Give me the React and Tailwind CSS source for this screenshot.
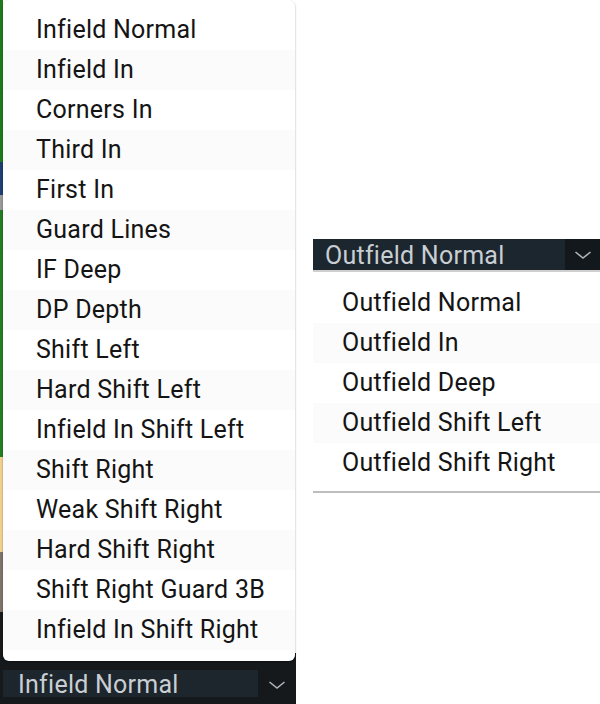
const infieldOptions = [
  'Infield Normal',
  'Infield In',
  'Corners In',
  'Third In',
  'First In',
  'Guard Lines',
  'IF Deep',
  'DP Depth',
  'Shift Left',
  'Hard Shift Left',
  'Infield In Shift Left',
  'Shift Right',
  'Weak Shift Right',
  'Hard Shift Right',
  'Shift Right Guard 3B',
  'Infield In Shift Right',
];

const outfieldOptions = [
  'Outfield Normal',
  'Outfield In',
  'Outfield Deep',
  'Outfield Shift Left',
  'Outfield Shift Right',
];

function Chevron() {
  return (
    <svg width="18" height="10" viewBox="0 0 18 10" fill="none">
      <path d="M1.5 2 L9 8 L16.5 2" stroke="#aeb4ba" strokeWidth="1.6" />
    </svg>
  );
}

function OptionRow({ label, index, pad }) {
  return (
    <div
      className={`flex h-10 items-center ${pad} ${index % 2 === 1 ? 'bg-[#fbfbfb]' : 'bg-white'}`}
    >
      {label}
    </div>
  );
}

export default function App() {
  return (
    <div className="flex h-[704px] w-[600px] overflow-hidden bg-white font-['Roboto',sans-serif] text-[25px] tracking-[0.25px] text-[#141414]">
      {/* infield picker, opened upward */}
      <div className="relative h-full w-[296px] shrink-0">
        <div className="flex h-[653px] w-[3px] flex-col">
          <div className="h-[162px] bg-[#1f7a1f]" />
          <div className="h-[33px] bg-[#1d3f73]" />
          <div className="h-[15px] bg-[#9a9a9a]" />
          <div className="h-[247px] bg-[#237d23]" />
          <div className="h-[95px] bg-[#f2cf8c]" />
          <div className="h-[60px] bg-[#7f7469]" />
          <div className="h-[41px] bg-[#1a1a1a]" />
        </div>
        <div className="flex h-[51px] bg-[#15191c] pt-[17px] pb-[7px]">
          <div className="ml-[3px] flex w-[255px] items-center bg-[#1d262d] pt-[3px] pl-[15px] text-[#c9ced3]">
            Infield Normal
          </div>
          <div className="flex flex-1 items-center justify-center pt-[3px]">
            <Chevron />
          </div>
        </div>

        <div className="absolute top-0 left-[3px] h-[661px] w-[292px] overflow-hidden rounded-md bg-white pt-[10px] shadow-[0_1px_2px_rgba(0,0,0,0.4)]">
          {infieldOptions.map((o, i) => (
            <OptionRow key={o} label={o} index={i} pad="pl-[33px]" />
          ))}
        </div>
      </div>

      {/* outfield picker, opened downward */}
      <div className="flex flex-1 flex-col pt-[239px] pl-[17px]">
        <div className="flex h-[31px] bg-[#13181c]">
          <div className="flex w-[252px] items-center bg-[#1c262e] pt-[2px] pl-[12px] text-[#c9ced3]">
            Outfield Normal
          </div>
          <div className="flex flex-1 items-center justify-center">
            <Chevron />
          </div>
        </div>
        <div className="border-t-2 border-b-2 border-t-[#cfcfcf] border-b-[#bdbdbd] bg-white pt-[11px] pb-[8px]">
          {outfieldOptions.map((o, i) => (
            <OptionRow key={o} label={o} index={i} pad="pl-[29px]" />
          ))}
        </div>
      </div>
    </div>
  );
}
